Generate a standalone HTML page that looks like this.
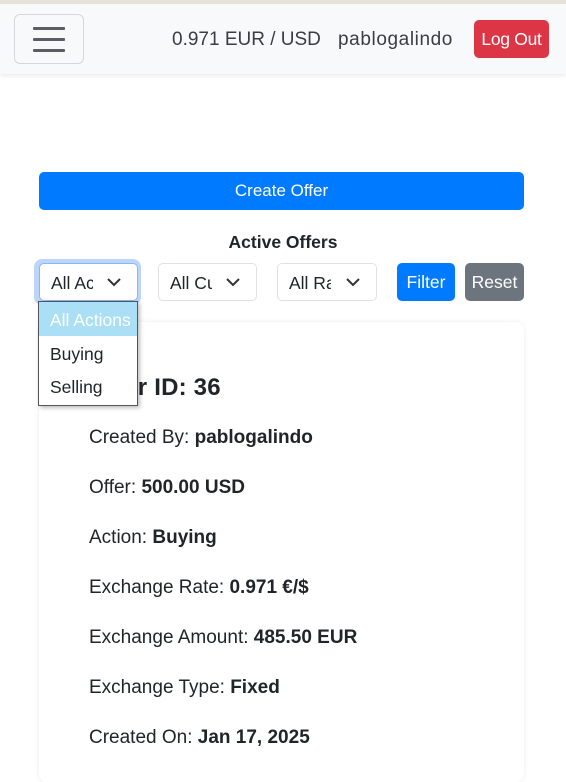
<!DOCTYPE html>
<html><head><meta charset="utf-8"><style>
*{box-sizing:border-box;margin:0;padding:0}
body{width:566px;height:773px;overflow:hidden;background:#fff;font-family:"Liberation Sans",sans-serif;color:#212529;position:relative}
.a{position:absolute}
.top{left:0;top:0;width:566px;height:4px;background:#e6e2da}
.nav{left:0;top:4px;width:566px;height:70px;background:#f8f9fa;box-shadow:0 2px 4px rgba(0,0,0,.08)}
.ham{left:14px;top:14px;width:70px;height:50px;border:1px solid #d5d7da;border-radius:6px}
.ham i{position:absolute;left:18px;width:32px;height:3px;background:#5a5d61;border-radius:1px}
.t{font-size:19px;color:#3a3e43;white-space:nowrap}
.btn{color:#fff;border-radius:5px;text-align:center;white-space:nowrap}
.sel{height:38px;border:1px solid #dee2e6;border-radius:5px;background:#fff;font-size:17.5px;padding:9px 0 0 11px;overflow:hidden;white-space:nowrap}
.sel span{display:inline-block;width:42px;overflow:hidden;vertical-align:top}
.sel svg{position:absolute;right:16px;top:14px}
.ln{left:89px;font-size:19px;white-space:nowrap}
.ln b{font-weight:bold}
</style></head><body>
<div class="a top"></div>
<div class="a nav"></div>
<div class="a ham"><i style="top:12px"></i><i style="top:23px"></i><i style="top:34px"></i></div>
<div class="a t" style="left:172px;top:29px">0.971 EUR / USD</div>
<div class="a t" style="left:338px;top:29px;letter-spacing:.6px">pablogalindo</div>
<div class="a btn" style="left:474px;top:20px;width:75px;height:38px;background:#dc3545;font-size:17.5px;line-height:38px;letter-spacing:-.3px">Log Out</div>
<div class="a btn" style="left:39px;top:172px;width:485px;height:38px;background:#007bff;font-size:17px;line-height:38px">Create Offer</div>
<div class="a" style="left:0;width:566px;top:232px;text-align:center;font-weight:bold;font-size:17.5px">Active Offers</div>
<div class="a" style="left:34px;top:259px;width:107px;height:46px;border-radius:8px;background:#bcd6fb"></div>
<div class="a sel" style="left:39px;top:263px;width:99px;border-color:#86b7fe"><span>All Ac</span><svg width="14" height="9" viewBox="0 0 14 9"><path d="M1 1l6 6 6-6" fill="none" stroke="#333" stroke-width="2"/></svg></div>
<div class="a sel" style="left:158px;top:263px;width:99px"><span>All Cu</span><svg width="14" height="9" viewBox="0 0 14 9"><path d="M1 1l6 6 6-6" fill="none" stroke="#333" stroke-width="2"/></svg></div>
<div class="a sel" style="left:277px;top:263px;width:100px"><span>All Ra</span><svg width="14" height="9" viewBox="0 0 14 9"><path d="M1 1l6 6 6-6" fill="none" stroke="#333" stroke-width="2"/></svg></div>
<div class="a btn" style="left:397px;top:263px;width:58px;height:38px;background:#007bff;font-size:17.5px;line-height:38px">Filter</div>
<div class="a btn" style="left:465px;top:263px;width:59px;height:38px;background:#6c757d;font-size:17.5px;line-height:38px">Reset</div>
<div class="a" style="left:39px;top:322px;width:485px;height:460px;border-radius:8px;box-shadow:0 0 6px rgba(0,0,0,.08)"></div>
<div class="a" style="left:89px;top:374px;font-size:24px;font-weight:bold;white-space:nowrap;letter-spacing:.2px">Offer ID: 36</div>
<div class="a" style="left:38px;top:301px;width:100px;height:105px;background:#fff;border:1px solid #555;box-shadow:2px 2px 4px rgba(0,0,0,.25);font-size:17.5px">
<div style="background:#aadff5;color:#fff;height:34px;padding:8px 0 0 11px;white-space:nowrap;overflow:hidden">All Actions</div>
<div style="height:34px;padding:8px 0 0 11px">Buying</div>
<div style="height:34px;padding:7px 0 0 11px">Selling</div>
</div>
<div class="a ln" style="top:427px">Created By: <b>pablogalindo</b></div>
<div class="a ln" style="top:477px">Offer: <b>500.00 USD</b></div>
<div class="a ln" style="top:527px">Action: <b>Buying</b></div>
<div class="a ln" style="top:577px">Exchange Rate: <b>0.971 €/$</b></div>
<div class="a ln" style="top:627px">Exchange Amount: <b>485.50 EUR</b></div>
<div class="a ln" style="top:677px">Exchange Type: <b>Fixed</b></div>
<div class="a ln" style="top:727px">Created On: <b>Jan 17, 2025</b></div>
</body></html>
